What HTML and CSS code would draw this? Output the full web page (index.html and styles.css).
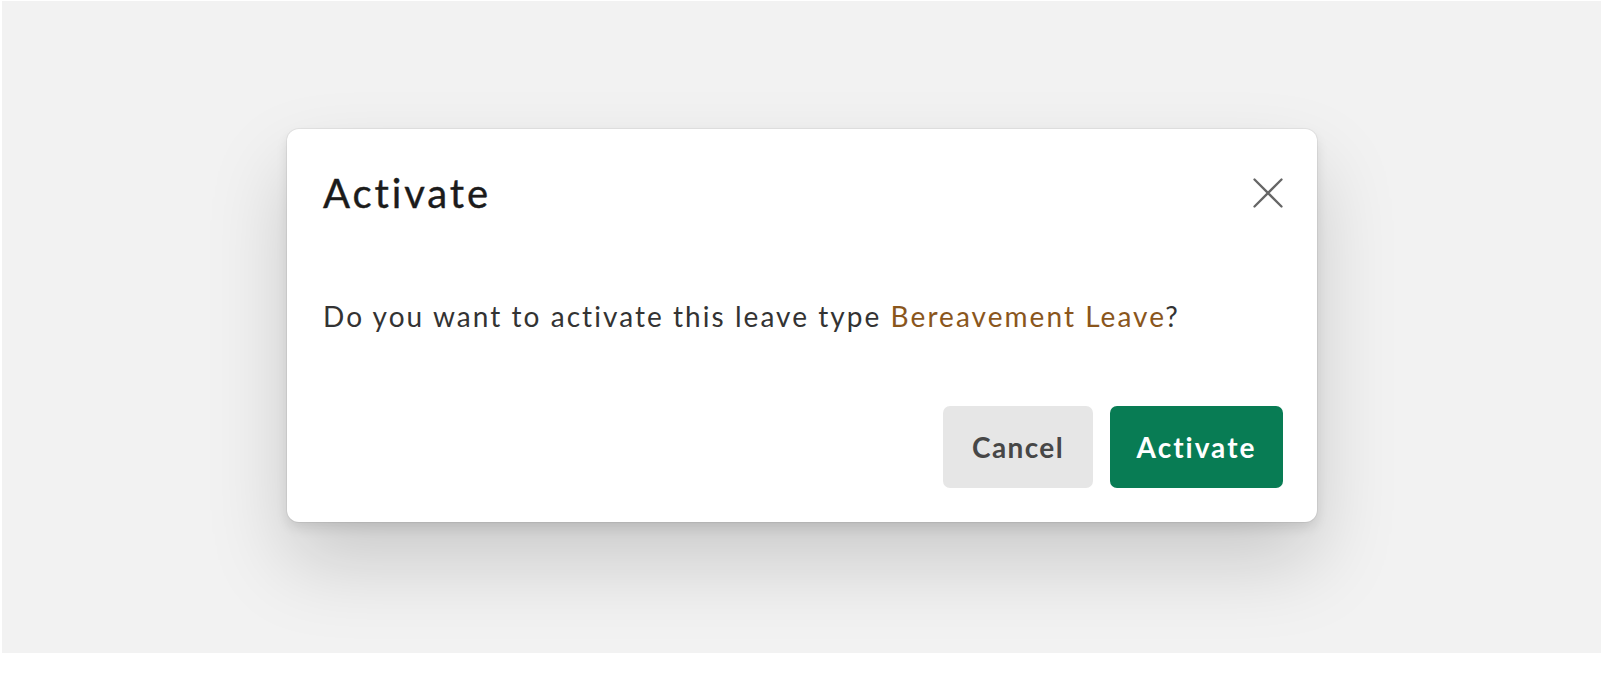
FILE: index.html
```html
<!DOCTYPE html>
<html>

<head>
    <title>Activate</title>

    <link rel="stylesheet" href="styles.css">

</head>

<body>
    <div class="backdrop">
        <div class="dialog">
            <div class="dialog-header">
                <div class="dialog-title">Activate</div>
                <button class="close-btn" aria-label="Close">
                    <svg width="30" height="30" viewBox="0 0 30 30">
                        <path d="M1.5 1.5 L28.5 28.5 M28.5 1.5 L1.5 28.5" stroke="#666" stroke-width="2.3" fill="none" stroke-linecap="round"/>
                    </svg>
                </button>
            </div>

            <div class="dialog-body">
                Do you want to activate this leave type <span class="leave-name">Bereavement Leave</span>?
            </div>

            <div class="dialog-buttons">
                <button class="btn btn-cancel">Cancel</button>
                <button class="btn btn-activate">Activate</button>
            </div>
        </div>
    </div>
</body>

</html>
```

FILE: styles.css
```css
body {
    margin: 0;
    background: #fff;

    font-family: Lato, "Noto Sans", sans-serif;
}

.backdrop {
    display: flex;
    align-items: flex-start;

    height: 652px;
    margin: 1px 0 0 2px;
    padding: 128px 0 0 285px;
    box-sizing: border-box;

    background: #f2f2f2;
}

.dialog {
    display: flex;
    flex-direction: column;

    width: 1030px;
    height: 393px;
    padding: 40px 34px 34px 36px;
    box-sizing: border-box;

    background: #fff;
    border-radius: 12px;
    box-shadow: 0 0 0 1px rgba(0, 0, 0, 0.05), 0 6px 12px rgba(0, 0, 0, 0.10), 0 40px 80px rgba(0, 0, 0, 0.17);
}

.dialog-header {
    display: flex;
    justify-content: space-between;
    align-items: center;
}

.dialog-title {
    font-size: 40px;
    line-height: 48px;
    letter-spacing: 2.9px;
    color: #1b1b1b;
    -webkit-text-stroke: 0.4px #1b1b1b;
}

.close-btn {
    display: flex;
    padding: 0;

    background: none;
    border: none;
    cursor: pointer;
}

.dialog-body {
    margin-top: 82px;

    font-size: 28px;
    line-height: 34px;
    letter-spacing: 2.05px;
    color: #333;
}

.leave-name {
    color: #8a561c;
}

.dialog-buttons {
    display: flex;
    justify-content: flex-end;
    gap: 17px;

    margin-top: auto;
}

.btn {
    height: 82px;
    padding: 0;

    border: none;
    border-radius: 7px;

    font-family: Lato, "Noto Sans", sans-serif;
    font-size: 28px;
    font-weight: bold;
    cursor: pointer;
}

.btn-cancel {
    width: 150px;
    letter-spacing: 1.4px;
    background: #e6e6e6;
    color: #474747;
}

.btn-activate {
    width: 173px;
    letter-spacing: 2px;
    background: #087c54;
    color: #fff;
}
```
